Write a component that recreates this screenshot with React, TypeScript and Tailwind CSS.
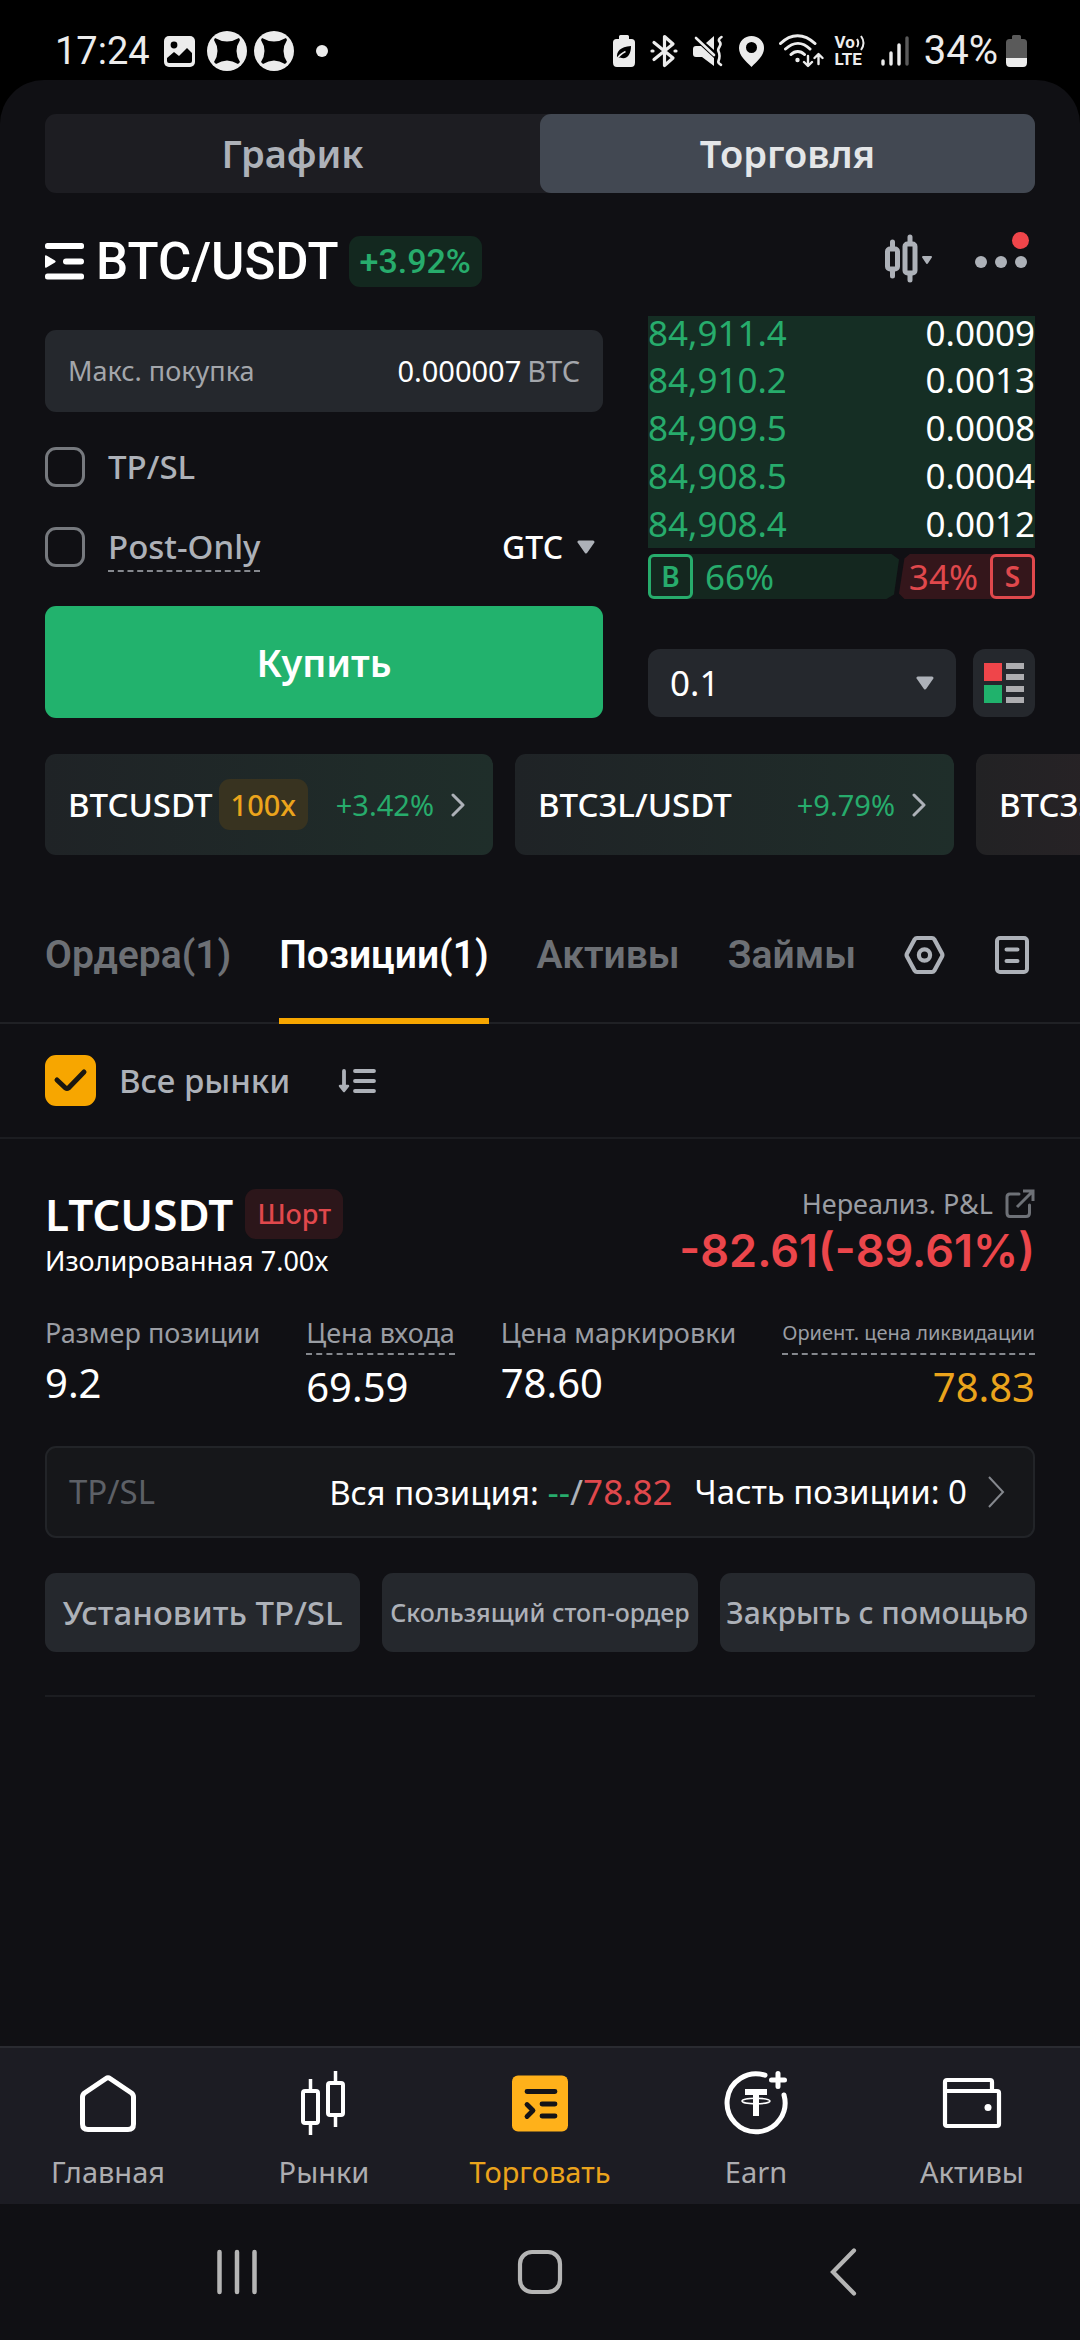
import React, { useState } from "react";

const bids = [
  { price: "84,911.4", size: "0.0009" },
  { price: "84,910.2", size: "0.0013" },
  { price: "84,909.5", size: "0.0008" },
  { price: "84,908.5", size: "0.0004" },
  { price: "84,908.4", size: "0.0012" },
];

const tabs = ["Ордера(1)", "Позиции(1)", "Активы", "Займы"];

const actions = [
  { label: "Установить TP/SL", size: "text-[33px]" },
  { label: "Скользящий стоп-ордер", size: "text-[25px]" },
  { label: "Закрыть с помощью", size: "text-[30px]" },
];

/* ---------- status bar icons ---------- */

const BybitBadge = () => (
  <svg width="40" height="40" viewBox="0 0 40 40">
    <circle cx="20" cy="20" r="20" fill="#ececec" />
    <path
      d="M8 7q12 7 24 0l1 2q-7 11 0 22l-2 2q-11-7-22 0l-2-2q7-11 0-22z"
      fill="#000"
    />
  </svg>
);

const ImageIcon = () => (
  <svg width="31" height="31" viewBox="0 0 31 31">
    <rect width="31" height="31" rx="5" fill="#ececec" />
    <circle cx="10" cy="9" r="3.4" fill="#000" />
    <path d="M3 22l7-6 5 4 8-8 5 5v8q0 2-2 2H5q-2 0-2-2z" fill="#000" />
  </svg>
);

const BatterySaver = () => (
  <svg width="22" height="32" viewBox="0 0 22 32">
    <path
      d="M6 1.500q0-1.500 1.500-1.500h7q1.500 0 1.500 1.500V4h2.500Q22 4 22 7.500v20q0 4.500-4 4.500H4q-4 0-4-4.500v-20Q0 4 3.500 4H6z"
      fill="#ececec"
    />
    <path d="M4 23c-.5-7 3-11 14-12 0 9-4 14-11 11.500z" fill="#000" />
    <path d="M3.500 24.500q3-5 9-8" stroke="#ececec" strokeWidth="1.500" fill="none" />
  </svg>
);

const BluetoothIcon = () => (
  <svg
    width="28"
    height="34"
    viewBox="0 0 28 34"
    fill="none"
    stroke="#ececec"
    strokeWidth="3.200"
    strokeLinecap="round"
    strokeLinejoin="round"
  >
    <path d="M4 8.500L23 24l-8.500 7.500v-29L23 10 4 25.500" />
    <path d="M2 17h1M25 17h1" />
  </svg>
);

const MuteIcon = () => (
  <svg width="31" height="32" viewBox="0 0 31 32">
    <path d="M0 14q0-3 3-3h5l13 12v8L9 22H3q-3 0-3-3zM13 8l8-7v14z" fill="#ececec" />
    <path
      d="M3 3l18 17"
      fill="none"
      stroke="#ececec"
      strokeWidth="2.600"
      strokeLinecap="round"
    />
    <path
      d="M28.500 2q-4 2.500-2 4.700t0 5-1 4.700 1 4.700-1 4.700 2.500 4"
      fill="none"
      stroke="#ececec"
      strokeWidth="2.600"
      strokeLinecap="round"
    />
  </svg>
);

const PinIcon = () => (
  <svg width="25" height="31" viewBox="0 0 25 31">
    <path
      d="M12.500 0C5.500 0 0 5.200 0 12c0 8 7 13 12.500 19C18 25 25 20 25 12 25 5.200 19.500 0 12.500 0zm0 17a5.500 5.500 0 110-11 5.500 5.500 0 010 11z"
      fill="#ececec"
      fillRule="evenodd"
    />
  </svg>
);

const WifiIcon = () => (
  <svg
    width="45"
    height="34"
    viewBox="0 0 45 34"
    fill="none"
    stroke="#ececec"
    strokeWidth="3"
    strokeLinecap="round"
    strokeLinejoin="round"
  >
    <path d="M1.500 9.500C12-1 25-1 36 9.500M6.500 15c8-7.500 17-7.500 24.500 0M12 20.500c4-4 9.500-4 13.500 0" />
    <circle cx="18.500" cy="26" r="1.200" fill="#ececec" strokeWidth="2" />
    <path d="M29 22v9.500m-4-3.500l4 4 4-4M39.500 30v-9.500m-4 3.500l4-4 4 4" strokeWidth="2.400" />
  </svg>
);

const SignalIcon = () => (
  <svg
    width="28"
    height="32"
    viewBox="0 0 28 32"
    stroke="#ececec"
    strokeWidth="3.400"
    strokeLinecap="round"
  >
    <path d="M2 26v3M10 18v11M18 10v19" />
    <path d="M26 3v26" stroke="#5a5a5a" />
  </svg>
);

const BatteryIcon = () => (
  <svg width="21" height="32" viewBox="0 0 21 32">
    <path
      d="M6 1.500Q6 0 7.500 0h6Q15 0 15 1.500V4h2.500Q21 4 21 7.500V23H0V7.500Q0 4 3.500 4H6z"
      fill="#5a5a5a"
    />
    <path d="M0 23h21v4.500q0 4.500-4 4.500H4q-4 0-4-4.500z" fill="#ececec" />
  </svg>
);

/* ---------- app icons ---------- */

const MenuIcon = () => (
  <svg width="39" height="37" viewBox="0 0 39 37" fill="#fff">
    <rect width="39" height="6" rx="2.500" />
    <rect x="18" y="15.500" width="21" height="6" rx="3" />
    <rect y="30.500" width="39" height="6" rx="2.500" />
    <path d="M0 13.500q0-2 1.500-1l8.500 5q1.500 1 0 2l-8.500 5q-1.500 1-1.500-1z" />
  </svg>
);

const CandlesIcon = () => (
  <svg
    width="48"
    height="56"
    viewBox="0 0 48 56"
    fill="none"
    stroke="#adb1b8"
    strokeWidth="5"
    strokeLinecap="round"
  >
    <rect x="2.500" y="15" width="10" height="20" rx="2.500" />
    <path d="M7.500 8v6M7.500 36v6" />
    <rect x="20" y="10" width="10" height="29" rx="2.500" />
    <path d="M25 3v6M25 40v6" />
    <path d="M38 23h8l-4 6z" fill="#adb1b8" strokeWidth="2" strokeLinejoin="round" />
  </svg>
);

const DotsIcon = () => (
  <svg width="52" height="12" viewBox="0 0 52 12" fill="#adb1b8">
    <circle cx="6" cy="6" r="6" />
    <circle cx="26" cy="6" r="6" />
    <circle cx="46" cy="6" r="6" />
  </svg>
);

const Caret = () => (
  <svg width="18" height="14" viewBox="0 0 18 14" className="pointer-events-none shrink-0">
    <path d="M2 2h14l-7 10z" fill="#adb1b8" stroke="#adb1b8" strokeWidth="3" strokeLinejoin="round" />
  </svg>
);

const Chevron = () => (
  <svg
    width="14"
    height="24"
    viewBox="0 0 14 24"
    fill="none"
    stroke="#adb1b8"
    strokeWidth="3"
    strokeLinecap="round"
    strokeLinejoin="round"
  >
    <path d="M2 2l10 10L2 22" />
  </svg>
);

const BookIcon = () => (
  <svg width="40" height="40" viewBox="0 0 40 40">
    <path d="M0 0h18v18H0z" fill="#ef454a" />
    <path d="M0 22h18v18H0z" fill="#20b26c" />
    <path d="M22 0h18v6H22zM22 11h18v6H22zM22 23h18v6H22zM22 34h18v6H22z" fill="#adadb0" />
  </svg>
);

const SettingsIcon = () => (
  <svg
    width="41"
    height="40"
    viewBox="0 0 41 40"
    fill="none"
    stroke="#adb1b8"
    strokeWidth="4.200"
    strokeLinejoin="round"
  >
    <path d="M13 3h15q1.500 0 2.300 1.300l7.700 14.200q.8 1.500 0 3l-7.700 14.200Q29.500 37 28 37H13q-1.500 0-2.300-1.300L3 21.500q-.8-1.500 0-3l7.700-14.200Q11.500 3 13 3z" />
    <circle cx="20.500" cy="20" r="5.600" />
  </svg>
);

const DocIcon = () => (
  <svg
    width="34"
    height="40"
    viewBox="0 0 34 40"
    fill="none"
    stroke="#adb1b8"
    strokeWidth="4"
    strokeLinecap="round"
  >
    <rect x="2" y="3" width="30" height="34" rx="3" />
    <path d="M11.500 14.500h11M11.500 26h11" />
  </svg>
);

const SortIcon = () => (
  <svg
    width="38"
    height="24"
    viewBox="0 0 38 24"
    fill="none"
    stroke="#adb1b8"
    strokeWidth="3.800"
    strokeLinecap="round"
    strokeLinejoin="round"
  >
    <path d="M17 2h19M17 12h19M17 22h19M6 2v16" />
    <path d="M2 17h8l-4 5z" fill="#adb1b8" strokeWidth="2.500" />
  </svg>
);

const ShareIcon = () => (
  <svg width="30" height="30" viewBox="0 0 30 30" fill="none" stroke="#6e7177" strokeWidth="3">
    <path d="M14 5H5Q2 5 2 8v16q0 3.500 3 3.500h16q3.500 0 3.500-3.500v-8" strokeLinecap="round" />
    <path d="M12 18L28 2M18 2h10v10" />
  </svg>
);

/* ---------- bottom bar icons ---------- */

const HomeIcon = () => (
  <svg width="66" height="66" viewBox="0 0 66 66" fill="none" stroke="#fff" strokeWidth="5">
    <path
      d="M31 8.500q2-1.500 4 0L56.500 23q2 1.500 2 4v27q0 5.500-5.500 5.500H13q-5.500 0-5.500-5.500V27q0-2.500 2-4z"
      strokeLinejoin="round"
    />
  </svg>
);

const MarketsIcon = () => (
  <svg width="66" height="66" viewBox="0 0 66 66" fill="none" stroke="#fff" strokeWidth="4">
    <rect x="12" y="21" width="15" height="32" rx="2" />
    <path d="M19.500 9v12M19.500 53v12M44.500 1v12M44.500 45v12" strokeWidth="3.500" />
    <rect x="37" y="13" width="15" height="32" rx="2" />
  </svg>
);

const TradeIcon = () => (
  <svg
    width="66"
    height="66"
    viewBox="0 0 66 66"
    fill="none"
    stroke="#141418"
    strokeWidth="4.800"
    strokeLinecap="round"
  >
    <rect x="5" y="5.500" width="56" height="56" rx="6" fill="#ffb11a" stroke="none" />
    <path d="M20 21.500h28M35 34h13M35 46h13" />
    <path d="M20 34.500l6 6-6 6" strokeLinejoin="round" />
  </svg>
);

const EarnIcon = () => (
  <svg width="66" height="66" viewBox="0 0 66 66" fill="none" stroke="#fff" strokeWidth="5">
    <path d="M42 5.200A29 29 0 1061 25" strokeLinecap="round" />
    <path d="M55 3.500v13M48.500 10h13" strokeLinecap="round" />
    <path d="M22 19h22v6h-8v21h-6V25h-8z" fill="#fff" stroke="none" />
    <ellipse cx="33" cy="31" rx="14" ry="2.800" strokeWidth="1.500" />
  </svg>
);

const WalletIcon = () => (
  <svg
    width="66"
    height="66"
    viewBox="0 0 66 66"
    fill="none"
    stroke="#fff"
    strokeWidth="4.200"
    strokeLinejoin="round"
  >
    <path d="M6 21V12q0-2 2-2h43q2 0 2 2v9" />
    <path d="M6 21h52q2 0 2 2v31q0 2-2 2H8q-2 0-2-2z" />
    <circle cx="49" cy="37.500" r="3.500" fill="#fff" stroke="none" />
  </svg>
);

const navItems = [
  { label: "Главная", icon: <HomeIcon /> },
  { label: "Рынки", icon: <MarketsIcon /> },
  { label: "Торговать", icon: <TradeIcon />, active: true },
  { label: "Earn", icon: <EarnIcon /> },
  { label: "Активы", icon: <WalletIcon /> },
];

const StatusBar = () => (
  <div className="flex h-20 items-center justify-between bg-black pt-[22px] pr-[53px] pl-[55px] font-['Roboto',sans-serif] text-[#ececec]">
    <div className="flex items-center">
      <span className="text-[38px] leading-10">17:24</span>
      <div className="ml-3.5 flex items-center gap-3">
        <ImageIcon />
        <div className="flex gap-[7px]">
          <BybitBadge />
          <BybitBadge />
        </div>
      </div>
      <span className="ml-[22px] size-3 rounded-full bg-[#ececec]" />
    </div>
    <div className="flex items-center gap-[15px]">
      <BatterySaver />
      <BluetoothIcon />
      <MuteIcon />
      <PinIcon />
      <div className="flex items-center gap-2.5">
        <WifiIcon />
        <div className="flex flex-col text-[17px] leading-[17px] font-bold">
          <span className="flex items-center">
            Vo
            <svg width="11" height="16" viewBox="0 0 11 16" fill="none" stroke="#ececec" strokeWidth="2">
              <path d="M2 4q2.500 4 0 8M6 1q5 7 0 14" />
            </svg>
          </span>
          <span>LTE</span>
        </div>
      </div>
      <SignalIcon />
      <div className="flex items-center gap-2">
        <span className="text-[40px] leading-10">34%</span>
        <BatteryIcon />
      </div>
    </div>
  </div>
);

interface StatProps {
  label: string;
  value: string;
  hint?: boolean;
  warning?: boolean;
}

const Stat: React.FC<StatProps> = ({ label, value, hint, warning }) => (
  <div className={warning ? "text-right" : ""}>
    <dt
      className={`leading-9 text-[#9a9da3] ${warning ? "text-[20px]" : "text-[27px]"} ${
        hint ? "border-b-2 border-dashed border-[#85888e] pb-0.5" : ""
      }`}
    >
      {label}
    </dt>
    <dd
      className={`mt-1 text-[40px] leading-[56px] ${warning ? "text-[#eba41c]" : "text-white"}`}
    >
      {value}
    </dd>
  </div>
);

const App: React.FC = () => {
  const [activeTab, setActiveTab] = useState("Позиции(1)");
  const [tpsl, setTpsl] = useState(false);
  const [postOnly, setPostOnly] = useState(false);
  const [allMarkets, setAllMarkets] = useState(true);

  return (
    <div className="flex min-h-screen flex-col bg-black font-['Noto_Sans',sans-serif] text-white">
      <StatusBar />

      <main className="flex-1 overflow-hidden rounded-t-[44px] bg-[#101014]">
        <div className="px-[45px] pt-[34px]">
          <div className="grid h-[79px] grid-cols-2 rounded-[11px] bg-[#1d1d22] text-[38px] font-semibold">
            <button className="rounded-[11px] text-[#adb1b8]">График</button>
            <button className="rounded-[11px] bg-[#424852] text-[#e4e6e8]">Торговля</button>
          </div>

          <div className="mt-[43px] flex h-[51px] items-center font-['Roboto',sans-serif] font-medium">
            <button className="flex items-center gap-3 text-[51px] leading-none" aria-label="BTC/USDT">
              <MenuIcon />
              BTC/USDT
            </button>
            <span className="ml-2.5 flex h-full items-center rounded-[11px] bg-[#13281f] px-[11px] text-[34px] text-[#27ac6c]">
              +3.92%
            </span>
            <button className="ml-auto" aria-label="График свечей">
              <CandlesIcon />
            </button>
            <button className="relative mr-2 ml-[42px]" aria-label="Ещё">
              <DotsIcon />
              <span className="absolute -top-6 -right-0.5 size-[17px] rounded-full bg-[#ef454a]" />
            </button>
          </div>

          <div className="mt-[29px] flex gap-[45px]">
            <div className="flex-1 pt-3.5">
              <div className="flex h-[82px] items-center justify-between rounded-[11px] bg-[#25282d] px-[23px]">
                <span className="text-[27px] text-[#a3a6ab]">Макс. покупка</span>
                <span className="flex gap-1.5 text-[29px]">
                  0.000007 <span className="text-[#a3a6ab]">BTC</span>
                </span>
              </div>

              <label className="mt-[35px] flex h-10 items-center gap-[23px] text-[33px] leading-10 font-medium text-[#adb1b8]">
                <input
                  type="checkbox"
                  checked={tpsl}
                  onChange={(e) => setTpsl(e.target.checked)}
                  className="size-10 appearance-none rounded-[11px] border-3 border-[#76797e] checked:bg-[#f7a600]"
                />
                TP/SL
              </label>

              <div className="mt-10 flex h-10 items-center justify-between">
                <label className="flex items-center gap-[23px] text-[33px] font-medium text-[#adb1b8]">
                  <input
                    type="checkbox"
                    checked={postOnly}
                    onChange={(e) => setPostOnly(e.target.checked)}
                    className="size-10 appearance-none rounded-[11px] border-3 border-[#76797e] checked:bg-[#f7a600]"
                  />
                  <span className="border-y-2 border-dashed border-t-transparent border-b-[#85888e] leading-[46px]">
                    Post-Only
                  </span>
                </label>
                <div className="flex items-center gap-3.5 pr-2">
                  <select
                    aria-label="Срок действия"
                    className="appearance-none bg-transparent text-[32px] leading-10 font-medium field-sizing-content"
                  >
                    <option>GTC</option>
                  </select>
                  <Caret />
                </div>
              </div>

              <button className="mt-[39px] h-28 w-full rounded-[11px] bg-[#22b26d] text-[38px] font-semibold">
                Купить
              </button>
            </div>

            <div className="w-[387px]">
              <table className="w-full bg-[#152e24] text-[35px]">
                <tbody>
                  {bids.map((bid) => (
                    <tr
                      key={bid.price}
                      className="h-12 leading-[48px] first:h-10 first:align-top first:leading-[34px]"
                    >
                      <td className="p-0 text-[#27ac6c]">{bid.price}</td>
                      <td className="p-0 text-right">{bid.size}</td>
                    </tr>
                  ))}
                </tbody>
              </table>

              <div className="mt-1.5 flex h-[45px] text-[35px] leading-[45px]">
                <div className="flex w-[251px] gap-3 rounded-l-md bg-[#14271f] text-[#27ac6c] [clip-path:polygon(0_0,97%_0,100%_12%,98%_90%,95%_100%,0_100%)]">
                  <span className="flex size-[45px] items-center justify-center rounded-md border-3 border-[#27ac6c] text-[28px] font-semibold">
                    B
                  </span>
                  66%
                </div>
                <div className="flex flex-1 items-center justify-end gap-3 rounded-r-md bg-[#34161b] text-[#e0484c] [clip-path:polygon(8%_0,100%_0,100%_100%,4%_100%,0_88%,4%_10%)]">
                  34%
                  <span className="flex size-[45px] items-center justify-center rounded-md border-3 border-[#e0484c] text-[28px] font-semibold">
                    S
                  </span>
                </div>
              </div>

              <div className="mt-[50px] flex h-[68px] gap-[17px]">
                <div className="flex flex-1 items-center rounded-xl bg-[#25282d] px-[22px]">
                  <select
                    aria-label="Шаг цены"
                    className="min-w-0 flex-1 appearance-none bg-transparent text-[35px] leading-10"
                  >
                    <option>0.1</option>
                  </select>
                  <Caret />
                </div>
                <button
                  aria-label="Вид стакана"
                  className="flex w-[62px] items-center justify-center rounded-xl bg-[#25282d]"
                >
                  <BookIcon />
                </button>
              </div>
            </div>
          </div>
        </div>

        <div className="mt-9 flex h-[101px] gap-[22px] overflow-hidden pl-[45px] text-[33px] font-medium">
          <a
            href="#btcusdt"
            className="flex w-[448px] shrink-0 items-center justify-between rounded-[11px] bg-linear-to-r from-[#1f2326] to-[#1f2e2a] pr-7 pl-[23px]"
          >
            <span className="flex items-center gap-1.5">
              BTCUSDT
              <span className="flex h-[51px] items-center rounded-[11px] bg-[#383320] px-3 text-[29px] text-[#eba41c]">
                100x
              </span>
            </span>
            <span className="flex items-center gap-[17px] text-[29px] font-normal text-[#27ac6c]">
              +3.42%
              <Chevron />
            </span>
          </a>
          <a
            href="#btc3l"
            className="flex w-[439px] shrink-0 items-center justify-between rounded-[11px] bg-linear-to-r from-[#1f2326] to-[#1f2e2a] pr-7 pl-[23px]"
          >
            BTC3L/USDT
            <span className="flex items-center gap-[17px] text-[29px] font-normal text-[#27ac6c]">
              +9.79%
              <Chevron />
            </span>
          </a>
          <a
            href="#btc3s"
            className="flex w-[439px] shrink-0 items-center rounded-[11px] bg-linear-to-r from-[#222224] to-[#33232a] pl-[23px]"
          >
            BTC3S/USDT
          </a>
        </div>

        <nav className="mt-[31px] flex h-[138px] items-center gap-12 px-[45px] font-['Roboto',sans-serif] text-[39px] font-semibold shadow-[inset_0_-2px_0_#202125]">
          {tabs.map((tab) => (
            <button
              key={tab}
              onClick={() => setActiveTab(tab)}
              className={`h-full ${
                tab === activeTab
                  ? "text-white shadow-[inset_0_-6px_0_#f7a600]"
                  : "text-[#6d7075]"
              }`}
            >
              {tab}
            </button>
          ))}
          <div className="flex flex-1 items-center justify-between pr-1.5">
            <button aria-label="Настройки">
              <SettingsIcon />
            </button>
            <button aria-label="История">
              <DocIcon />
            </button>
          </div>
        </nav>

        <div className="flex h-[115px] items-center gap-12 border-b-2 border-[#1c1d21] px-[45px]">
          <label className="flex items-center gap-[23px] text-[33px] font-medium text-[#adb1b8]">
            <span className="relative size-[51px]">
              <input
                type="checkbox"
                checked={allMarkets}
                onChange={(e) => setAllMarkets(e.target.checked)}
                className="block size-[51px] appearance-none rounded-[11px] border-3 border-[#76797e] checked:border-[#f7a600] checked:bg-[#f7a600]"
              />
              {allMarkets && (
                <svg
                  viewBox="0 0 51 51"
                  className="pointer-events-none absolute inset-0"
                  fill="none"
                  stroke="#1a1710"
                  strokeWidth="5"
                  strokeLinecap="round"
                  strokeLinejoin="round"
                >
                  <path d="M12 25l8.500 8q1.500 1 3 0L39 17" />
                </svg>
              )}
            </span>
            Все рынки
          </label>
          <button aria-label="Сортировка">
            <SortIcon />
          </button>
        </div>

        <section className="mx-[45px] border-b-2 border-[#1c1d21] pt-[50px] pb-[43px]">
          <div className="flex justify-between">
            <div>
              <div className="flex h-[50px] items-center gap-3">
                <h2 className="text-[44px] leading-[50px] font-semibold">LTCUSDT</h2>
                <span className="flex h-full items-center rounded-[11px] bg-[#2c161a] px-3 text-[27px] font-medium text-[#e0484c]">
                  Шорт
                </span>
              </div>
              <p className="mt-1 text-[27px] leading-9">Изолированная 7.00x</p>
            </div>
            <div className="text-right">
              <div className="flex items-center justify-end gap-3 text-[27px] leading-[30px] text-[#9a9da3]">
                Нереализ. P&amp;L
                <button aria-label="Поделиться">
                  <ShareIcon />
                </button>
              </div>
              <p className="mt-1 font-['Inter',sans-serif] text-[45px] leading-[56px] font-semibold text-[#eb464b]">
                -82.61(-89.61%)
              </p>
            </div>
          </div>

          <dl className="mt-9 flex justify-between whitespace-nowrap">
            <Stat label="Размер позиции" value="9.2" />
            <Stat label="Цена входа" value="69.59" hint />
            <Stat label="Цена маркировки" value="78.60" />
            <Stat label="Ориент. цена ликвидации" value="78.83" hint warning />
          </dl>

          <button className="mt-[31px] flex h-[92px] w-full items-center rounded-[11px] border-2 border-[#222428] bg-[#16171a] pr-7 pl-[22px] text-[33px] leading-10 whitespace-nowrap">
            <span className="text-[#5d6066]">TP/SL</span>
            <span className="ml-auto">
              Вся позиция:{" "}
              <span className="text-[35px] text-[#adb1b8]">
                <span className="text-[#27ac6c]">--</span>/
                <span className="text-[#e0484c]">78.82</span>
              </span>
            </span>
            <span className="ml-[22px]">Часть позиции: 0</span>
            <svg
              width="18"
              height="32"
              viewBox="0 0 18 32"
              className="ml-5"
              fill="none"
              stroke="#85888e"
              strokeWidth="2"
            >
              <path d="M2 1l14 15L2 31" />
            </svg>
          </button>

          <div className="mt-[35px] grid grid-cols-3 gap-[22px]">
            {actions.map((action) => (
              <button
                key={action.label}
                className={`h-[79px] rounded-[11px] bg-[#25282d] font-medium whitespace-nowrap text-[#adb1b8] ${action.size}`}
              >
                {action.label}
              </button>
            ))}
          </div>
        </section>
      </main>

      <nav className="grid h-[158px] grid-cols-5 border-t-2 border-[#2a2b31] bg-[#1c1c23]">
        {navItems.map((item) => (
          <a
            key={item.label}
            href={`#${item.label}`}
            className={`flex flex-col items-center pt-[22px] text-[29px] leading-10 ${
              item.active ? "text-[#eba41c]" : "text-[#adadb0]"
            }`}
          >
            {item.icon}
            <span className="mt-4">{item.label}</span>
          </a>
        ))}
      </nav>

      {/* system navigation */}
      <div className="grid h-[136px] grid-cols-3 place-items-center bg-[#101014] px-[86px]">
        <button aria-label="Недавние">
          <svg width="42" height="46" viewBox="0 0 42 46" stroke="#b5b5b5" strokeWidth="4.500" strokeLinecap="round">
            <path d="M3.500 3v40M21 3v40M38.500 3v40" />
          </svg>
        </button>
        <button aria-label="Домой">
          <svg width="46" height="46" viewBox="0 0 46 46" fill="none" stroke="#b5b5b5" strokeWidth="4.200">
            <rect x="3" y="3" width="40" height="40" rx="12" />
          </svg>
        </button>
        <button aria-label="Назад">
          <svg
            width="28"
            height="48"
            viewBox="0 0 28 48"
            fill="none"
            stroke="#b5b5b5"
            strokeWidth="4.200"
            strokeLinecap="round"
          >
            <path d="M25 2.500L4 24l21 21.500" />
          </svg>
        </button>
      </div>
    </div>
  );
};

export default App;
